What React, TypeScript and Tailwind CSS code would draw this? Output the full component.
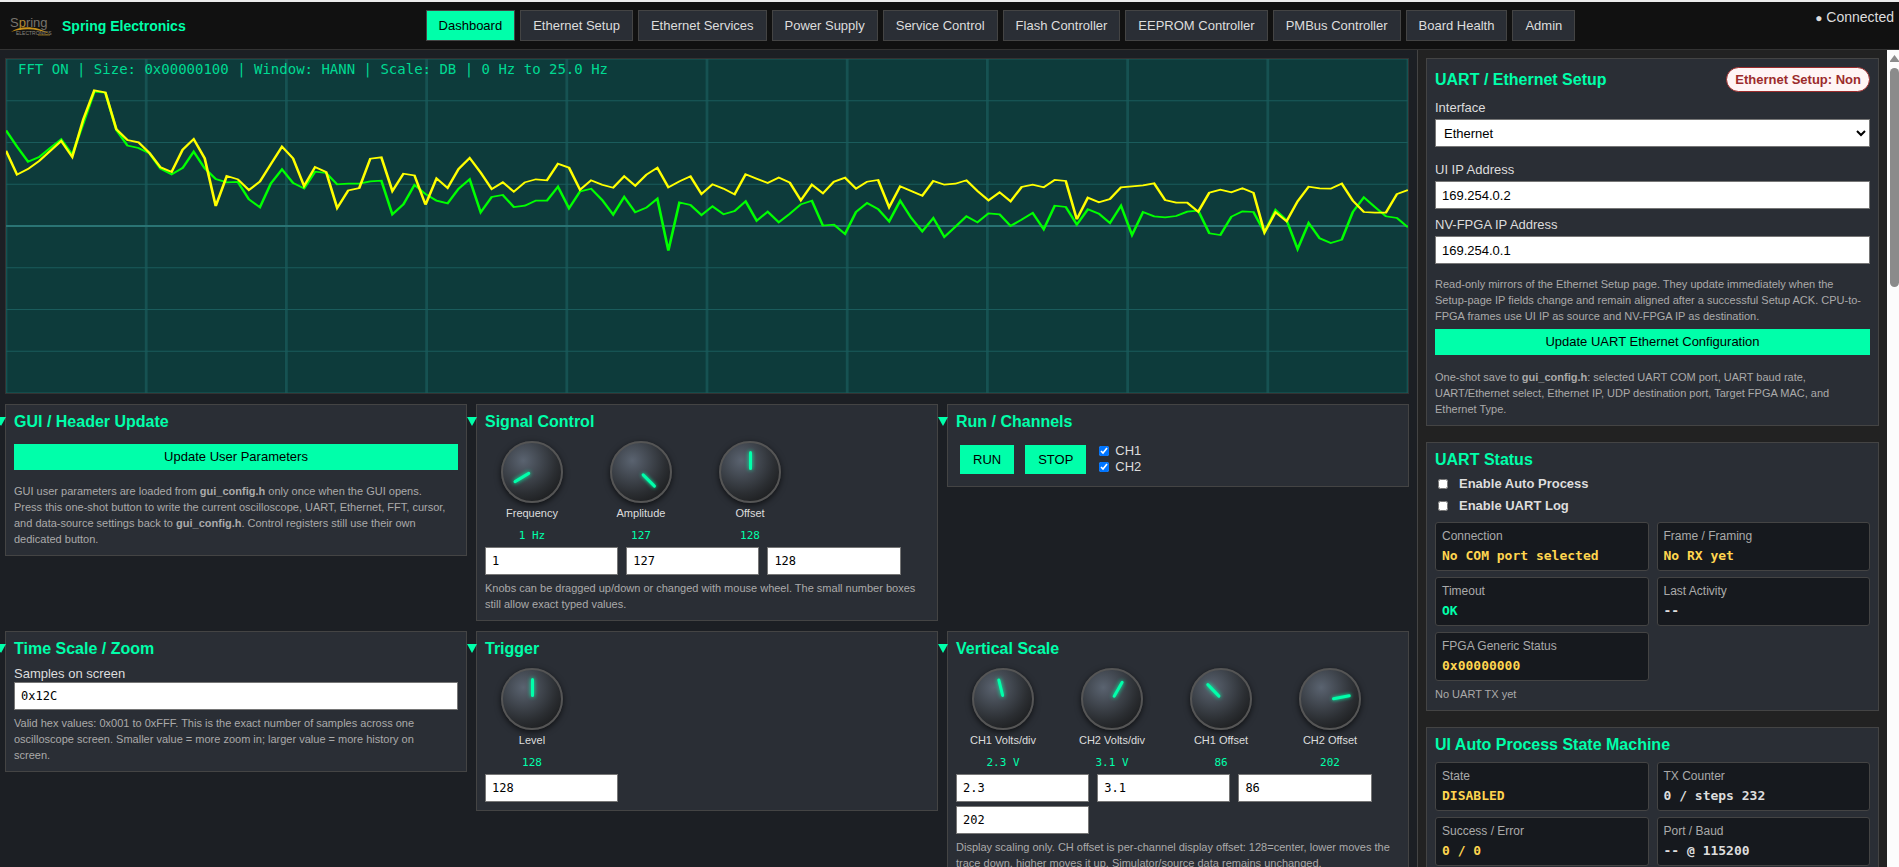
import { ReactNode } from "react";

const TABS = [
  "Dashboard",
  "Ethernet Setup",
  "Ethernet Services",
  "Power Supply",
  "Service Control",
  "Flash Controller",
  "EEPROM Controller",
  "PMBus Controller",
  "Board Health",
  "Admin",
];

const CH1 = [
  391, 440, 485, 471, 444, 418, 464, 370, 275, 278, 390, 437, 444, 460, 506,
  523, 504, 455, 505, 537, 547, 546, 598, 622, 550, 508, 549, 565, 515, 519,
  553, 551, 551, 544, 542, 643, 613, 555, 582, 602, 610, 566, 538, 637, 591,
  585, 621, 617, 602, 602, 560, 625, 574, 566, 600, 644, 591, 637, 623, 596,
  752, 607, 615, 645, 619, 643, 633, 604, 662, 635, 667, 641, 613, 602, 677,
  674, 702, 636, 609, 627, 664, 602, 654, 694, 654, 711, 680, 649, 667, 640,
  643, 678, 659, 639, 688, 617, 621, 674, 628, 641, 669, 617, 705, 636, 649,
  652, 648, 635, 632, 700, 705, 650, 634, 636, 697, 630, 660, 747, 669, 715,
  729, 719, 636, 592, 621, 649, 654, 682,
];

const CH2 = [
  452, 524, 507, 483, 453, 423, 471, 358, 271, 277, 388, 420, 427, 459, 502,
  516, 449, 417, 475, 618, 528, 538, 570, 545, 492, 440, 475, 558, 501, 516,
  624, 571, 564, 476, 472, 573, 521, 526, 614, 535, 564, 507, 474, 518, 567,
  547, 575, 547, 538, 541, 491, 503, 569, 541, 554, 563, 529, 557, 524, 503,
  562, 544, 529, 582, 553, 566, 583, 523, 536, 549, 533, 548, 601, 554, 580,
  545, 533, 566, 545, 540, 622, 559, 573, 587, 543, 554, 551, 541, 573, 601,
  577, 604, 561, 554, 562, 540, 543, 658, 593, 607, 597, 562, 559, 556, 550,
  600, 608, 608, 635, 578, 569, 577, 565, 578, 697, 637, 664, 604, 560, 565,
  566, 551, 602, 636, 638, 638, 582, 570,
];

const SCOPE_W = 900;
const SCOPE_H = 334;

function tracePoints(bins: number[]) {
  return bins
    .map((v, i) => `${(i * SCOPE_W) / (bins.length - 1)},${(v - 177) / 3}`)
    .join(" ");
}

function Logo() {
  return (
    <svg width="42" height="20" viewBox="0 0 42 20" aria-label="Spring Electronics logo">
      <text x="0" y="11" fontSize="13" fontFamily="Liberation Sans Narrow, Liberation Sans, sans-serif" fill="#77736c">
        S<tspan fill="#b08a35">p</tspan>ring
      </text>
      <path d="M1 16 C9 10 25 9 40 18 C27 12 12 12 1 16Z" fill="#c8921a" />
      <text x="6" y="19" fontSize="5" fontFamily="Liberation Sans, sans-serif" fill="#8a867e">
        ELECTRONICS
      </text>
      <path d="M28 19 H40" stroke="#8a6a1c" strokeWidth="1" />
    </svg>
  );
}

function Scope() {
  return (
    <div className="relative border border-[#333] bg-[#0d3b3b]">
      <svg
        className="block h-[334px] w-full"
        viewBox={`0 0 ${SCOPE_W} ${SCOPE_H}`}
        preserveAspectRatio="none"
      >
        {Array.from({ length: 11 }, (_, i) => (
          <line key={i} x1={i * 90} x2={i * 90} y1="0" y2={SCOPE_H} stroke="#165252" strokeWidth="1.8" />
        ))}
        {Array.from({ length: 9 }, (_, i) => (
          <line key={i} x1="0" x2={SCOPE_W} y1={i * 41.75} y2={i * 41.75} stroke="#1a5c5c" strokeWidth="1" />
        ))}
        <line x1="0" x2={SCOPE_W} y1="167" y2="167" stroke="#2a7474" strokeWidth="2" />
        <polyline points={tracePoints(CH1)} fill="none" stroke="#00ff00" strokeWidth="1.7" />
        <polyline points={tracePoints(CH2)} fill="none" stroke="#ffff00" strokeWidth="1.7" />
      </svg>
      <p className="absolute left-3 top-0.5 font-['DejaVu_Sans_Mono',monospace] text-[14px] leading-4 text-[#00d992]">
        FFT ON | Size: 0x00000100 | Window: HANN | Scale: DB | 0 Hz to 25.0 Hz
      </p>
    </div>
  );
}

function Panel({ title, children }: { title: string; children: ReactNode }) {
  return (
    <details open className="border border-[#444] bg-[#2a2e35] p-2">
      <summary className="relative block cursor-pointer text-[16px] font-bold leading-[18px] text-[#00ffaa]">
        <svg className="absolute -left-[18px] top-1" width="10" height="9" viewBox="0 0 10 9">
          <polygon points="0,0 10,0 5,9" fill="#00ffaa" />
        </svg>
        {title}
      </summary>
      {children}
    </details>
  );
}

function SidePanel({ title, badge, children }: { title: string; badge?: string; children: ReactNode }) {
  return (
    <section className="border border-[#444] bg-[#2a2e35] p-2">
      <div className="flex items-center justify-between">
        <h2 className="text-[16px] font-bold leading-[18px] text-[#00ffaa]">{title}</h2>
        {badge && (
          <span className="rounded-full border border-[#9b2c2c] bg-[#fff5f5] px-2 py-1 font-bold leading-[15px] text-[#9b2c2c]">
            {badge}
          </span>
        )}
      </div>
      {children}
    </section>
  );
}

function Hint({ className, children }: { className: string; children: ReactNode }) {
  return <p className={`${className} text-[11px] leading-4 text-[#aaa]`}>{children}</p>;
}

function WideButton({ className, children }: { className: string; children: ReactNode }) {
  return (
    <button className={`${className} block h-[26px] w-full bg-[#00ffaa] text-black`}>{children}</button>
  );
}

type KnobProps = { label: string; value: string; angle: number };

function Knob({ label, value, angle }: KnobProps) {
  return (
    <div className="flex w-[94px] flex-col items-center">
      <div
        role="slider"
        aria-label={label}
        aria-valuenow={parseFloat(value)}
        tabIndex={0}
        className="size-[62px] rounded-full border-2 border-[#555] bg-[radial-gradient(circle_at_35%_30%,#5a6370,#2b2e32_60%,#111)] shadow-[0_2px_6px_#000a]"
      >
        <div className="flex size-full justify-center pt-2" style={{ transform: `rotate(${angle}deg)` }}>
          <div className="h-[19px] w-[3px] rounded-sm bg-[#00ffaa] shadow-[0_0_4px_#00ffaa]" />
        </div>
      </div>
      <span className="mt-1 text-[11px] leading-[13px] text-[#ddd]">{label}</span>
      <span className="mt-[9px] font-['DejaVu_Sans_Mono',monospace] text-[11px] leading-[14px] text-[#00ffaa]">
        {value}
      </span>
    </div>
  );
}

function KnobRow({ knobs }: { knobs: KnobProps[] }) {
  return (
    <>
      <div className="mt-[10px] flex gap-[15px]">
        {knobs.map((k) => (
          <Knob key={k.label} {...k} />
        ))}
      </div>
      <div className="mt-1 flex flex-wrap gap-x-2 gap-y-1">
        {knobs.map((k) => (
          <input
            key={k.label}
            aria-label={k.label}
            defaultValue={k.value.split(" ")[0]}
            className="h-7 w-[30%] border border-[#767676] bg-white px-1.5 font-['DejaVu_Sans_Mono',monospace] text-[12px] text-black"
          />
        ))}
      </div>
    </>
  );
}

function StatusBox({ label, value, color = "text-[#ddd]" }: { label: string; value: string; color?: string }) {
  return (
    <div className="rounded-[3px] border border-[#444] bg-[#16191e] p-1.5">
      <div className="text-[12px] leading-[14px] text-[#aaa]">{label}</div>
      <div className={`mt-1 font-['DejaVu_Sans_Mono',monospace] font-bold leading-[17px] ${color}`}>{value}</div>
    </div>
  );
}

export default function App() {
  return (
    <div className="flex h-screen flex-col overflow-hidden border-t-2 border-[#ececec] bg-[#1c1f24] font-['Liberation_Sans',Arial,sans-serif] text-[13px] leading-4 text-[#ddd]">
      <header className="flex items-center justify-between border-b border-[#333] bg-[#111] py-2 pl-[10px] pr-[5px]">
        <div className="flex items-center gap-[10px]">
          <Logo />
          <h1 className="text-[14px] font-bold text-[#00ffaa]">Spring Electronics</h1>
        </div>
        <nav className="flex gap-[5px]">
          {TABS.map((tab, i) => (
            <button
              key={tab}
              className={`border border-[#444] px-3 py-[7px] leading-[15px] ${
                i === 0 ? "bg-[#00ffaa] text-black" : "bg-[#2a2e35] text-[#ddd]"
              }`}
            >
              {tab}
            </button>
          ))}
        </nav>
        <div className="self-start text-[14px] leading-[15px]">
          <span className="text-[12px]">●</span> Connected
        </div>
      </header>

      <div className="flex min-h-0 flex-1">
        <main className="min-w-0 flex-1 overflow-hidden pl-[5px] pr-2 pt-2">
          <Scope />
          <div className="mt-[10px] grid grid-cols-3 items-start gap-x-[9px] gap-y-[10px]">
            <Panel title="GUI / Header Update">
              <WideButton className="mt-[13px]">Update User Parameters</WideButton>
              <Hint className="mt-[13px] pr-2">
                GUI user parameters are loaded from <b>gui_config.h</b> only once when the GUI opens.
                Press this one-shot button to write the current oscilloscope, UART, Ethernet, FFT,
                cursor, and data-source settings back to <b>gui_config.h</b>. Control registers still
                use their own dedicated button.
              </Hint>
            </Panel>

            <Panel title="Signal Control">
              <KnobRow
                knobs={[
                  { label: "Frequency", value: "1 Hz", angle: -121 },
                  { label: "Amplitude", value: "127", angle: 135 },
                  { label: "Offset", value: "128", angle: 0 },
                ]}
              />
              <Hint className="mt-[5px]">
                Knobs can be dragged up/down or changed with mouse wheel. The small number boxes
                still allow exact typed values.
              </Hint>
            </Panel>

            <Panel title="Run / Channels">
              <div className="mt-3 flex items-start gap-[11px] pb-[3px] pl-1">
                <button className="mt-0.5 bg-[#00ffaa] px-[13px] py-[7px] leading-[15px] text-black">RUN</button>
                <button className="mt-0.5 bg-[#00ffaa] px-[13px] py-[7px] leading-[15px] text-black">STOP</button>
                <div className="ml-0.5">
                  {["CH1", "CH2"].map((ch) => (
                    <label key={ch} className="flex items-center gap-1.5">
                      <input type="checkbox" defaultChecked className="size-[10px]" />
                      {ch}
                    </label>
                  ))}
                </div>
              </div>
            </Panel>

            <Panel title="Time Scale / Zoom">
              <label className="mt-2 block">
                Samples on screen
                <input
                  defaultValue="0x12C"
                  className="block h-7 w-full border border-[#767676] bg-white px-1.5 font-['DejaVu_Sans_Mono',monospace] text-[12px] text-black"
                />
              </label>
              <Hint className="mt-[5px] pr-2">
                Valid hex values: 0x001 to 0xFFF. This is the exact number of samples across one
                oscilloscope screen. Smaller value = more zoom in; larger value = more history on
                screen.
              </Hint>
            </Panel>

            <Panel title="Trigger">
              <KnobRow knobs={[{ label: "Level", value: "128", angle: 0 }]} />
            </Panel>

            <Panel title="Vertical Scale">
              <KnobRow
                knobs={[
                  { label: "CH1 Volts/div", value: "2.3 V", angle: -14 },
                  { label: "CH2 Volts/div", value: "3.1 V", angle: 30 },
                  { label: "CH1 Offset", value: "86", angle: -44 },
                  { label: "CH2 Offset", value: "202", angle: 79 },
                ]}
              />
              <Hint className="mt-[5px]">
                Display scaling only. CH offset is per-channel display offset: 128=center, lower
                moves the trace down, higher moves it up. Simulator/source data remains unchanged.
              </Hint>
            </Panel>
          </div>
        </main>

        <aside className="flex w-[482px] shrink-0 border-l border-[#444] bg-[#222]">
          <div className="flex flex-1 flex-col gap-4 overflow-hidden p-2">
            <SidePanel title="UART / Ethernet Setup" badge="Ethernet Setup: Non">
              <label className="mt-2 block">
                Interface
                <select className="mt-[3px] block h-7 w-full border border-[#767676] bg-white px-1 text-black">
                  <option>Ethernet</option>
                  <option>UART</option>
                </select>
              </label>
              <label className="mt-[15px] block">
                UI IP Address
                <input
                  readOnly
                  value="169.254.0.2"
                  className="mt-[3px] block h-7 w-full border border-[#767676] bg-white px-1.5 text-black"
                />
              </label>
              <label className="mt-2 block">
                NV-FPGA IP Address
                <input
                  readOnly
                  value="169.254.0.1"
                  className="mt-[3px] block h-7 w-full border border-[#767676] bg-white px-1.5 text-black"
                />
              </label>
              <Hint className="mt-3 pr-1">
                Read-only mirrors of the Ethernet Setup page. They update immediately when the
                Setup-page IP fields change and remain aligned after a successful Setup ACK.
                CPU-to-FPGA frames use UI IP as source and NV-FPGA IP as destination.
              </Hint>
              <WideButton className="mt-[5px]">Update UART Ethernet Configuration</WideButton>
              <Hint className="mt-[14px]">
                One-shot save to <b>gui_config.h</b>: selected UART COM port, UART baud rate,
                UART/Ethernet select, Ethernet IP, UDP destination port, Target FPGA MAC, and
                Ethernet Type.
              </Hint>
            </SidePanel>

            <SidePanel title="UART Status">
              <div className="mb-[5px] mt-1">
                {["Enable Auto Process", "Enable UART Log"].map((text) => (
                  <label key={text} className="flex h-[22px] items-center gap-[11px] pl-[3px] font-bold">
                    <input type="checkbox" className="size-[10px]" />
                    {text}
                  </label>
                ))}
              </div>
              <div className="grid grid-cols-2 gap-x-2 gap-y-1.5">
                <StatusBox label="Connection" value="No COM port selected" color="text-[#ffd54f]" />
                <StatusBox label="Frame / Framing" value="No RX yet" color="text-[#ffd54f]" />
                <StatusBox label="Timeout" value="OK" color="text-[#00ffaa]" />
                <StatusBox label="Last Activity" value="--" />
                <StatusBox label="FPGA Generic Status" value="0x00000000" color="text-[#ffd54f]" />
              </div>
              <Hint className="mt-[5px]">No UART TX yet</Hint>
            </SidePanel>

            <SidePanel title="UI Auto Process State Machine">
              <div className="mt-2 grid grid-cols-2 gap-x-2 gap-y-1.5">
                <StatusBox label="State" value="DISABLED" color="text-[#ffd54f]" />
                <StatusBox label="TX Counter" value="0 / steps 232" />
                <StatusBox label="Success / Error" value="0 / 0" color="text-[#ffd54f]" />
                <StatusBox label="Port / Baud" value="-- @ 115200" />
              </div>
            </SidePanel>
          </div>
          <div className="w-3 overflow-hidden bg-[#fcfcfc] pl-[3px] pt-[5px]">
            <svg width="9" height="7" viewBox="0 0 9 7">
              <path d="M4.5 0 L9 6 V7 H0 V6Z" fill="#8b8b8b" />
            </svg>
            <div className="mt-1.5 h-[219px] w-[9px] rounded-full bg-[#8b8b8b]" />
          </div>
        </aside>
      </div>
    </div>
  );
}
